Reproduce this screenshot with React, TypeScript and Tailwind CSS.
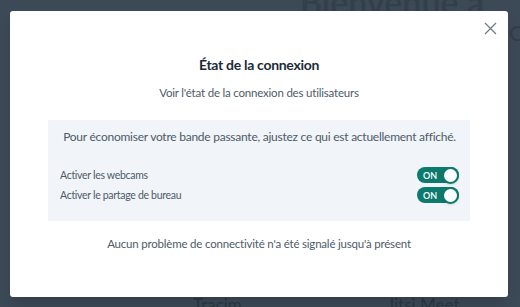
import React from "react";

function Toggle() {
  return (
    <div className="flex h-[16px] w-[42px] items-center justify-between rounded-full bg-[#0c7b6d] pl-[6px]">
      <span className="text-[9px] leading-none font-semibold text-white">ON</span>
      <span className="h-[17px] w-[17px] rounded-full border-2 border-[#0c7b6d] bg-white shadow-sm" />
    </div>
  );
}

export default function App() {
  return (
    <div
      className="relative h-[307px] w-[520px] overflow-hidden bg-[#3c4956]"
      style={{ fontFamily: "Lato, 'Open Sans', sans-serif" }}
    >
      {/* page content behind the overlay */}
      <div className="absolute left-[300px] top-[-24px] text-[34px] font-semibold text-[#2c3742] opacity-50">
        Bienvenue à vous
      </div>
      <div className="absolute left-[509px] top-[16px] text-[22px] text-[#2c3742] opacity-60">Op</div>
      <div className="absolute left-[193px] top-[292px] text-[17px] text-[#25303a] opacity-70">Tracim</div>
      <div className="absolute left-[387px] top-[292px] text-[17px] text-[#25303a] opacity-70">Jitsi Meet</div>

      <div className="absolute inset-0 pl-[10px] pt-[11px]">
        <div className="relative flex h-[286px] w-[498px] flex-col items-center rounded-[3px] bg-white shadow-lg">
          <button className="absolute right-[11px] top-[11px] text-[#6f7b88]">
            <svg width="13" height="13" viewBox="0 0 13 13" fill="none" stroke="currentColor" strokeWidth="1.3">
              <path d="M1 1 L12 12 M12 1 L1 12" />
            </svg>
          </button>

          <h2 className="mt-[44px] text-[14px] leading-[20px] font-bold tracking-[-0.3px] text-[#1c2b3a]">
            État de la connexion
          </h2>
          <p className="mt-[10px] text-[11.5px] leading-[16px] tracking-[-0.2px] text-[#4e5b68]">
            Voir l'état de la connexion des utilisateurs
          </p>

          <div className="mt-[19px] flex h-[101px] w-[422px] flex-col bg-[#f1f4f8] pl-[12px] pr-[11px]">
            <p className="mt-[9px] whitespace-nowrap text-center text-[12px] leading-[16px] tracking-[-0.25px] text-[#4e5b68]">
              Pour économiser votre bande passante, ajustez ce qui est actuellement affiché.
            </p>
            <div className="mt-[22px] flex items-center justify-between">
              <span className="text-[10.5px] leading-[14px] tracking-[-0.3px] text-[#4e5b68]">Activer les webcams</span>
              <Toggle />
            </div>
            <div className="mt-[4px] flex items-center justify-between">
              <span className="text-[10.5px] leading-[14px] tracking-[-0.3px] text-[#4e5b68]">
                Activer le partage de bureau
              </span>
              <Toggle />
            </div>
          </div>

          <p className="mt-[15px] text-[11.5px] leading-[16px] tracking-[-0.2px] text-[#4e5b68]">
            Aucun problème de connectivité n'a été signalé jusqu'à présent
          </p>
        </div>
      </div>
    </div>
  );
}
